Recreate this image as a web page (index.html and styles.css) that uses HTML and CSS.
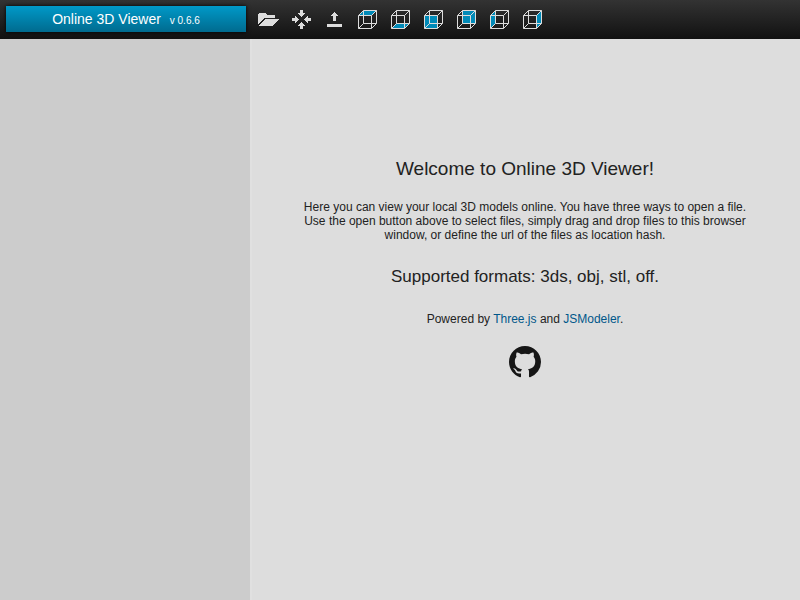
FILE: index.html
```
<!DOCTYPE html>
<html lang="en">
<head>
<meta charset="utf-8">
<title>Online 3D Viewer</title>
<link rel="stylesheet" href="styles.css">
</head>
<body>
<svg class="defs" width="0" height="0">
  <symbol id="cube" viewBox="0 0 19 19"><path d="M.5 5.5h13v13h-13zM5.5.5h13v13h-13zM.5 5.5l5-5M13.5 5.5l5-5M.5 18.5l5-5M13.5 18.5l5-5"/></symbol>
</svg>
<header class="top">
  <div class="title">Online 3D Viewer <span class="version">v 0.6.6</span></div>
  <nav class="toolbar">
    <svg class="solid" viewBox="0 0 33 32"><path d="M8 21V10h1V9h7v1h1v1h8v3H14l-6 7zM8 22l7-7h14l-7 7z"/></svg>
    <svg class="solid" viewBox="0 0 33 32"><path d="M17 6h3v3h2v1h-1v1h-1v1h-1v1h-1v-1h-1v-1h-1v-1h-1V9h2zM17 25h3v-3h2v-1h-1v-1h-1v-1h-1v-1h-1v1h-1v1h-1v1h-1v1h2zM9 14h3v-2h1v1h1v1h1v1h1v1h-1v1h-1v1h-1v1h-1v-2H9zM28 14h-3v-2h-1v1h-1v1h-1v1h-1v1h1v1h1v1h1v1h1v-2h3z"/></svg>
    <svg class="solid" viewBox="0 0 33 32"><path d="M11 20h15v3H11zM17 17v-5h-2v-1h1v-1h1V9h1V8h1v1h1v1h1v1h1v1h-2v5z"/></svg>
    <svg class="view" viewBox="0 0 19 19"><path class="face" d="M.5 5.5l5-5h13l-5 5z"/><use href="#cube"/></svg>
    <svg class="view" viewBox="0 0 19 19"><path class="face" d="M.5 18.5l5-5h13l-5 5z"/><use href="#cube"/></svg>
    <svg class="view" viewBox="0 0 19 19"><path class="face" d="M.5 5.5h13v13h-13z"/><use href="#cube"/></svg>
    <svg class="view" viewBox="0 0 19 19"><path class="face" d="M5.5.5h13v13h-13z"/><use href="#cube"/></svg>
    <svg class="view" viewBox="0 0 19 19"><path class="face" d="M.5 5.5l5-5v13l-5 5z"/><use href="#cube"/></svg>
    <svg class="view" viewBox="0 0 19 19"><path class="face" d="M13.5 5.5l5-5v13l-5 5z"/><use href="#cube"/></svg>
  </nav>
</header>
<div class="main">
  <aside class="sidebar"></aside>
  <main class="intro">
    <h1>Welcome to Online 3D Viewer!</h1>
    <p class="about">Here you can view your local 3D models online. You have three ways to open a file. Use the open button above to select files, simply drag and drop files to this browser window, or define the url of the files as location hash.</p>
    <h2>Supported formats: 3ds, obj, stl, off.</h2>
    <p class="powered">Powered by <a>Three.js</a> and <a>JSModeler</a>.</p>
    <svg class="github" viewBox="0 0 16 16"><path d="M8 0C3.58 0 0 3.58 0 8c0 3.54 2.29 6.53 5.47 7.59.4.07.55-.17.55-.38 0-.19-.01-.82-.01-1.49-2.01.37-2.53-.49-2.69-.94-.09-.23-.48-.94-.82-1.13-.28-.15-.68-.52-.01-.53.63-.01 1.08.58 1.23.82.72 1.21 1.87.87 2.33.66.07-.52.28-.87.51-1.07-1.78-.2-3.64-.89-3.64-3.95 0-.87.31-1.59.82-2.15-.08-.2-.36-1.02.08-2.12 0 0 .67-.21 2.2.82.64-.18 1.32-.27 2-.27s1.36.09 2 .27c1.53-1.04 2.2-.82 2.2-.82.44 1.1.16 1.92.08 2.12.51.56.82 1.27.82 2.15 0 3.07-1.87 3.75-3.65 3.95.29.25.54.73.54 1.48 0 1.07-.01 1.93-.01 2.2 0 .21.15.46.55.38A8.01 8.01 0 0 0 16 8c0-4.42-3.58-8-8-8z"/></svg>
  </main>
</div>
</body>
</html>
```
FILE: styles.css
```
body {
  margin: 0;
  height: 600px;
  display: flex;
  flex-direction: column;
  overflow: hidden;
  font: 12px/14px "Liberation Sans", Arial, sans-serif;
  color: #222;
  background: #ddd;
}
.defs { position: absolute; }
.top {
  display: flex;
  height: 39px;
  flex: none;
  background: linear-gradient(#333, #111);
}
.title {
  width: 240px;
  height: 26px;
  margin: 6px 0 0 6px;
  line-height: 26px;
  font-size: 14px;
  text-align: center;
  color: #fff;
  background: linear-gradient(#0099c8, #006b8f);
  box-shadow: 0 0 4px #000;
}
.version {
  font-size: 10px;
  margin-left: 5px;
}
.toolbar {
  display: flex;
  align-items: flex-start;
  padding: 4px 0 0 4px;
}
.solid {
  width: 33px;
  height: 32px;
  fill: #ddd;
  shape-rendering: crispEdges;
}
.solid + .view { margin-left: 9px; }
.view {
  width: 19px;
  height: 19px;
  margin: 6px 14px 0 0;
  fill: none;
  stroke: #ddd;
}
.face {
  fill: #008ab8;
  stroke: none;
}
.main {
  display: flex;
  flex: 1;
}
.sidebar {
  width: 250px;
  background: #ccc;
  border-right: 2px solid #e0e0e0;
}
.intro {
  flex: 1;
  display: flex;
  flex-direction: column;
  align-items: center;
  padding: 119px 50px 0 48px;
  text-align: center;
}
h1 {
  margin: 0 0 20px;
  font-size: 19px;
  line-height: 22px;
  font-weight: normal;
}
.about { margin: 0 0 25px; }
h2 {
  margin: 0 0 25px;
  font-size: 17px;
  line-height: 20px;
  font-weight: normal;
}
.powered { margin: 0 0 20px; }
a { color: #00578a; }
.github {
  width: 32px;
  height: 32px;
  fill: #161616;
}
```
